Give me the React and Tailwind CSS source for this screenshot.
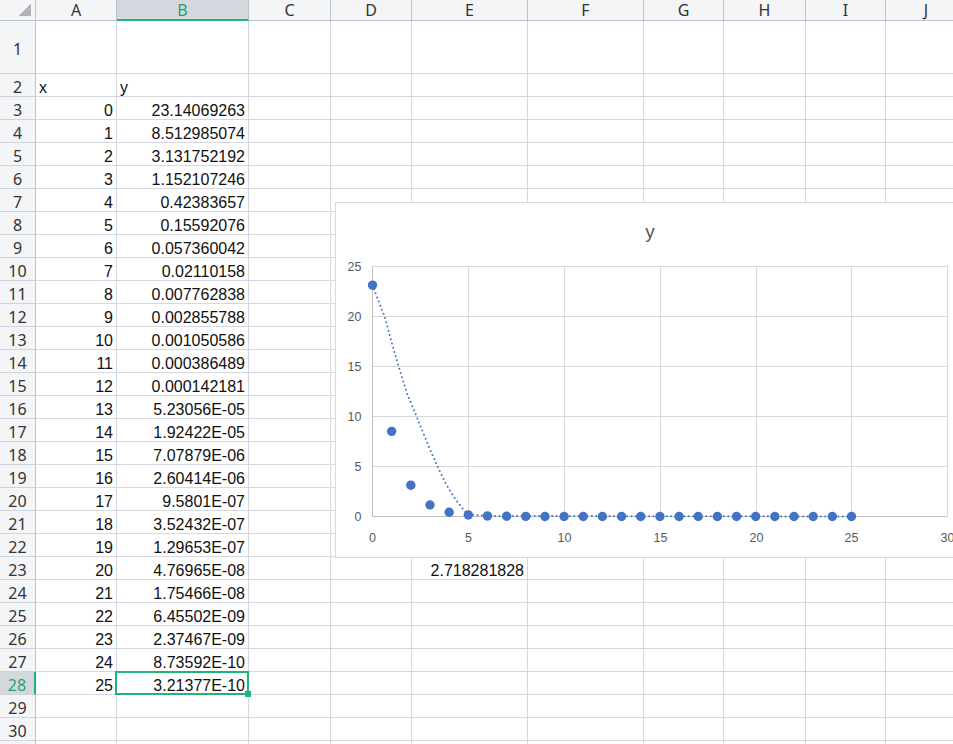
import React from "react";

const cols = [
  { k: "", w: "w-[36px]" },
  { k: "A", w: "w-[81px]" },
  { k: "B", w: "w-[132px]" },
  { k: "C", w: "w-[82px]" },
  { k: "D", w: "w-[81px]" },
  { k: "E", w: "w-[116px]" },
  { k: "F", w: "w-[116px]" },
  { k: "G", w: "w-[80px]" },
  { k: "H", w: "w-[82px]" },
  { k: "I", w: "w-[80px]" },
  { k: "J", w: "w-[81px]" },
];

const values = [
  "23.14069263", "8.512985074", "3.131752192", "1.152107246", "0.42383657",
  "0.15592076", "0.057360042", "0.02110158", "0.007762838", "0.002855788",
  "0.001050586", "0.000386489", "0.000142181", "5.23056E-05", "1.92422E-05",
  "7.07879E-06", "2.60414E-06", "9.5801E-07", "3.52432E-07", "1.29653E-07",
  "4.76965E-08", "1.75466E-08", "6.45502E-09", "2.37467E-09", "8.73592E-10",
  "3.21377E-10",
];

const rowNums = Array.from({ length: 31 }, (_, i) => i + 1);

function cellContent(r, c) {
  if (r === 2 && c === "A") return { t: "x", left: true };
  if (r === 2 && c === "B") return { t: "y", left: true };
  if (r >= 3 && r <= 28) {
    if (c === "A") return { t: String(r - 3) };
    if (c === "B") return { t: values[r - 3] };
  }
  if (r === 23 && c === "E") return { t: "2.718281828" };
  return null;
}

const X = (x) => 36.5 + x * 19.16;
const Y = (y) => 313.5 - y * 10;

function Chart() {
  const vx = [0, 5, 10, 15, 20, 25, 30];
  const vxPix = [36.5, 132.5, 228.5, 324.5, 420.5, 515.5, 611.5];
  const hy = [0, 5, 10, 15, 20, 25];
  const trend = [
    [0, 23.14], [0.3, 21.6], [0.63, 20], [1.0, 17.4], [1.36, 15], [1.8, 12.3],
    [2.3, 10], [2.85, 7.4], [3.39, 5], [3.85, 3.2], [4.3, 1.8], [4.7, 0.8],
    [5, 0.2], [6, 0.06], [25, 0],
  ];
  const d = trend.map(([x, y], i) => `${i ? "L" : "M"}${X(x).toFixed(1)} ${Y(y).toFixed(1)}`).join(" ");
  return (
    <div className="absolute left-[335px] top-[202px] w-[640px] h-[356px] bg-white border border-[#d9d9d9] z-20">
      <svg width="640" height="354" className="block" style={{ fontFamily: '"Liberation Sans", Arial, sans-serif' }}>
        <text x="314" y="30" fontSize="19" fill="#595959" textAnchor="middle" dominantBaseline="middle">y</text>
        {hy.map((v) => (
          <line key={"h" + v} x1="36" x2="612" y1={Y(v)} y2={Y(v)} stroke={v === 0 ? "#bfbfbf" : "#d9d9d9"} strokeWidth="1" />
        ))}
        {vxPix.map((px, i) => (
          <line key={"v" + i} x1={px} x2={px} y1="63" y2="314" stroke={i === 0 ? "#bfbfbf" : "#d9d9d9"} strokeWidth="1" />
        ))}
        {hy.map((v) => (
          <text key={"yl" + v} x="25.5" y={Y(v) + 4.5} fontSize="12.5" fill="#595959" textAnchor="end">{v}</text>
        ))}
        {vx.map((v, i) => (
          <text key={"xl" + v} x={vxPix[i]} y="338.5" fontSize="12.5" fill="#595959" textAnchor="middle">{v}</text>
        ))}
        <path d={d} fill="none" stroke="#4472c4" strokeWidth="2" strokeDasharray="0 4.4" strokeLinecap="round" />
        {Array.from({ length: 26 }, (_, i) => (
          <circle key={"p" + i} cx={X(i)} cy={Y(Math.exp(Math.PI - i))} r="4.7" fill="#4472c4" />
        ))}
      </svg>
    </div>
  );
}

export default function App() {
  return (
    <div className="relative w-[953px] h-[744px] overflow-hidden bg-white" style={{ fontFamily: '"Liberation Sans", Arial, sans-serif' }}>
      <div className="w-[967px]">
        {/* header row */}
        <div className="flex h-[21px]">
          {cols.map((c, i) => {
            if (i === 0)
              return (
                <div key="corner" className={`${c.w} relative shrink-0 bg-[#f4f5f7] border-r border-b border-[#bcc1cf]`}>
                  <svg width="13" height="13" className="absolute left-[19px] top-[4px]">
                    <path d="M12 0 L12 12 L0 12 L0 11 L1 11 L1 10 L2 10 L2 9 L3 9 L3 8 L4 8 L4 7 L5 7 L5 6 L6 6 L6 5 L7 5 L7 4 L8 4 L8 3 L9 3 L9 2 L10 2 L10 1 L11 1 L11 0 Z" fill="#b1b3b8" />
                  </svg>
                </div>
              );
            const sel = c.k === "B";
            return (
              <div
                key={c.k}
                className={`${c.w} shrink-0 flex items-center justify-center text-[16px] leading-none border-r border-[#bcc1cf] ${
                  sel ? "bg-[#d4d7de] text-[#1fa46e] border-b-2 border-b-[#21b47a]" : "bg-[#f4f5f7] text-[#333333] border-b"
                }`}
                style={{ fontFamily: '"Noto Sans", sans-serif' }}
              >
                {c.k}
              </div>
            );
          })}
        </div>
        {rowNums.map((r) => (
          <div key={r} className={`flex ${r === 1 ? "h-[53px]" : "h-[23px]"}`}>
            {cols.map((c, i) => {
              if (i === 0) {
                const sel = r === 28;
                return (
                  <div
                    key="rh"
                    className={`${c.w} shrink-0 flex items-center justify-center pt-[3px] text-[16px] leading-none border-b border-b-[#d0d4de] ${
                      sel ? "bg-[#d4d7de] text-[#1fa46e] border-r-2 border-r-[#21b47a]" : "bg-[#f4f5f7] text-[#333333] border-r border-r-[#bcc1cf]"
                    }`}
                    style={{ fontFamily: '"Noto Sans", sans-serif' }}
                  >
                    {r <= 30 ? r : ""}
                  </div>
                );
              }
              const content = cellContent(r, c.k);
              return (
                <div
                  key={c.k}
                  className={`${c.w} shrink-0 flex items-center px-[3px] pt-[5px] text-[16px] leading-none text-[#111111] border-r border-b border-[#d5d8e1] ${
                    content && content.left ? "justify-start" : "justify-end"
                  }`}
                >
                  {content ? <span className="whitespace-nowrap">{content.t}</span> : null}
                </div>
              );
            })}
          </div>
        ))}
      </div>
      {/* active cell selection */}
      <div className="absolute left-[115px] top-[671px] w-[134px] h-[24px] border-2 border-[#21b47a] z-10 pointer-events-none" />
      <div className="absolute left-[245px] top-[691px] w-[6px] h-[6px] bg-[#21b47a] z-10" />
      <Chart />
    </div>
  );
}
